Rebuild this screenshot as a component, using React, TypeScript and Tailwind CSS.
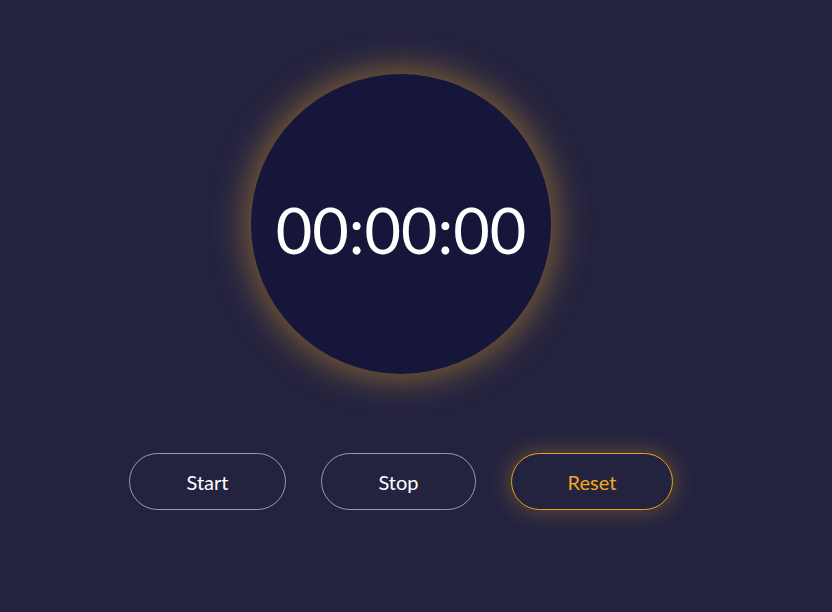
export default function App() {
  return (
    <div className="flex h-[612px] w-full flex-col items-center bg-[#24233f] pr-[30px] pt-[74px] font-['Lato','Liberation_Sans',sans-serif]">
      <div className="flex h-[300px] w-[300px] items-center justify-center rounded-full bg-[#15163a] shadow-[0_0_32px_6px_rgba(210,150,40,0.5)]">
        <span className="pt-[10px] text-[63px] leading-none text-white">00:00:00</span>
      </div>
      <div className="mt-[79px] flex items-center gap-[35px]">
        <button className="h-[57px] w-[157px] rounded-full border border-[#9a98ae] text-[20px] text-white">
          Start
        </button>
        <button className="h-[57px] w-[155px] rounded-full border border-[#9a98ae] text-[20px] text-white">
          Stop
        </button>
        <button className="h-[57px] w-[162px] rounded-full border border-[#e8a412] text-[20px] text-[#f2a91e] shadow-[0_0_20px_2px_rgba(210,150,40,0.35)]">
          Reset
        </button>
      </div>
    </div>
  );
}
